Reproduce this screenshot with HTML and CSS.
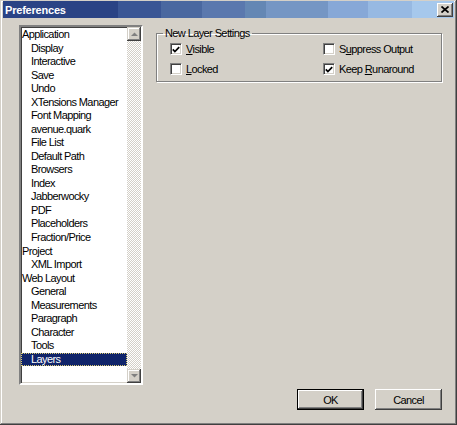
FILE: index.html
```html
<!DOCTYPE html>
<html>
<head>
<meta charset="utf-8">
<link rel="stylesheet" href="styles.css">
</head>
<body>
<div class="window">
  <div class="titlebar">
    <span class="title">Preferences</span>
    <span class="close"><svg width="8" height="7" viewBox="0 0 8 7"><path d="M0.5 0.5 L7.5 6.5 M7.5 0.5 L0.5 6.5" stroke="#000" stroke-width="1.7" fill="none"/></svg></span>
  </div>
  <div class="content">
    <div class="listbox">
      <ul class="items">
        <li class="top">Application</li>
        <li class="sub">Display</li>
        <li class="sub">Interactive</li>
        <li class="sub">Save</li>
        <li class="sub">Undo</li>
        <li class="sub">XTensions Manager</li>
        <li class="sub">Font Mapping</li>
        <li class="sub">avenue.quark</li>
        <li class="sub">File List</li>
        <li class="sub">Default Path</li>
        <li class="sub">Browsers</li>
        <li class="sub">Index</li>
        <li class="sub">Jabberwocky</li>
        <li class="sub">PDF</li>
        <li class="sub">Placeholders</li>
        <li class="sub">Fraction/Price</li>
        <li class="top">Project</li>
        <li class="sub">XML Import</li>
        <li class="top">Web Layout</li>
        <li class="sub">General</li>
        <li class="sub">Measurements</li>
        <li class="sub">Paragraph</li>
        <li class="sub">Character</li>
        <li class="sub">Tools</li>
        <li class="sub selected">Layers</li>
      </ul>
      <div class="scrollbar">
        <div class="sbtn"><svg width="7" height="4" viewBox="0 0 7 4"><path d="M0 4 L3.5 0.5 L7 4 Z" fill="#808080"/></svg></div>
        <div class="track"></div>
        <div class="sbtn"><svg width="7" height="4" viewBox="0 0 7 4"><path d="M0 0 L3.5 3.5 L7 0 Z" fill="#808080"/></svg></div>
      </div>
    </div>
    <div class="right">
      <fieldset class="group">
        <legend>New Layer Settings</legend>
        <div class="checks">
          <label class="check"><span class="box"><svg width="8" height="8" viewBox="0 0 8 8"><path d="M0.8 3.3 L2.9 5.5 L7.2 1.2" stroke="#000" stroke-width="1.7" fill="none"/></svg></span><span><u>V</u>isible</span></label>
          <label class="check"><span class="box"></span><span>S<u>u</u>ppress Output</span></label>
          <label class="check"><span class="box"></span><span><u>L</u>ocked</span></label>
          <label class="check"><span class="box"><svg width="8" height="8" viewBox="0 0 8 8"><path d="M0.8 3.3 L2.9 5.5 L7.2 1.2" stroke="#000" stroke-width="1.7" fill="none"/></svg></span><span>Keep <u>R</u>unaround</span></label>
        </div>
      </fieldset>
      <div class="buttons">
        <span class="btn default"><span class="btn-face">OK</span></span>
        <span class="btn"><span class="btn-face">Cancel</span></span>
      </div>
    </div>
  </div>
</div>
</body>
</html>
```
FILE: styles.css
```css
* { box-sizing: border-box; }
html, body { margin: 0; padding: 0; }
body {
  width: 457px;
  height: 425px;
  overflow: hidden;
  background: #d4d0c8;
  font-family: "Liberation Sans", Arial, sans-serif;
  font-size: 11px;
  letter-spacing: -0.6px;
  color: #000;
}
.window {
  width: 457px;
  height: 425px;
  background: #d4d0c8;
  padding: 1px 3px 3px 3px;
  box-shadow: inset -1px -1px #404040, inset 1px 1px #d4d0c8, inset -2px -2px #808080, inset 2px 2px #ffffff;
  display: flex;
  flex-direction: column;
}
.titlebar {
  height: 17px;
  display: flex;
  align-items: center;
  justify-content: space-between;
  padding: 0 1px 0 2px;
  background: linear-gradient(to right,
    #2a4385 0 115px, #3a5695 115px 158px, #4a68a0 158px 199px,
    #5a78ae 199px 242px, #6487b4 242px 263px, #7596c4 263px 325px,
    #87a8d7 325px 365px, #97b9e2 365px 409px, #a6c8ec 409px);
}
.title {
  color: #fff;
  font-weight: bold;
  font-size: 11px;
  letter-spacing: -0.2px;
}
.close {
  width: 16px;
  height: 14px;
  background: #d4d0c8;
  display: flex;
  align-items: center;
  justify-content: center;
  box-shadow: inset -1px -1px #404040, inset 1px 1px #ffffff, inset -2px -2px #808080;
}
.content {
  display: flex;
  align-items: flex-start;
  padding: 7px 0 0 16px;
}
.listbox {
  width: 124px;
  height: 360px;
  background: #fff;
  border-style: solid;
  border-width: 2px;
  border-color: #808080 #ffffff #ffffff #808080;
  box-shadow: inset 1px 1px #404040, inset -1px -1px #d4d0c8;
  display: flex;
}
.items {
  list-style: none;
  margin: 0;
  padding: 1px 0 0 0;
  flex: 1;
}
.items li {
  height: 13.54px;
  line-height: 13.54px;
  white-space: nowrap;
}
.items li.top { padding-left: 1px; }
.items li.sub { padding-left: 10px; }
.items li.selected {
  background: #10246a;
  color: #fff;
  outline: 1px dotted #d8c870;
  outline-offset: -1px;
}
.scrollbar {
  width: 14px;
  display: flex;
  flex-direction: column;
}
.sbtn {
  height: 14px;
  background: #d4d0c8;
  display: flex;
  align-items: center;
  justify-content: center;
  box-shadow: inset -1px -1px #404040, inset 1px 1px #d4d0c8, inset -2px -2px #808080, inset 2px 2px #ffffff;
}
.track {
  flex: 1;
  background-image: conic-gradient(#d4d0c8 0 25%, #ffffff 0 50%, #d4d0c8 0 75%, #ffffff 0);
  background-size: 2px 2px;
}
.right {
  width: 286px;
  height: 385px;
  margin-left: 13px;
  display: flex;
  flex-direction: column;
}
.group {
  margin: 2px 0 0 0;
  padding: 2px 0 0 13px;
  height: 55px;
  min-width: 0;
  border: 1px solid #808080;
  box-shadow: inset 1px 1px #ffffff, 1px 1px #ffffff;
}
.group legend {
  padding: 0 2px;
  margin-left: -7px;
  line-height: 13px;
}
.checks {
  display: grid;
  grid-template-columns: 153px auto;
  row-gap: 6px;
}
.check {
  display: flex;
  align-items: center;
  gap: 4px;
  height: 14px;
}
.box {
  width: 12px;
  height: 12px;
  background: #fff;
  border-style: solid;
  border-width: 1px;
  border-color: #808080 #ffffff #ffffff #808080;
  box-shadow: inset 1px 1px #404040, inset -1px -1px #d4d0c8;
  display: flex;
  align-items: center;
  justify-content: center;
}
.box svg { margin-top: 1px; }
.check u { text-decoration: underline; }
.buttons {
  margin-top: auto;
  display: flex;
  justify-content: flex-end;
  gap: 11px;
}
.btn {
  width: 67px;
  height: 21px;
  display: flex;
  background: #d4d0c8;
}
.btn-face {
  flex: 1;
  display: flex;
  align-items: center;
  justify-content: center;
  box-shadow: inset -1px -1px #404040, inset 1px 1px #ffffff, inset -2px -2px #808080;
}
.btn.default {
  border: 1px solid #000;
}
```
